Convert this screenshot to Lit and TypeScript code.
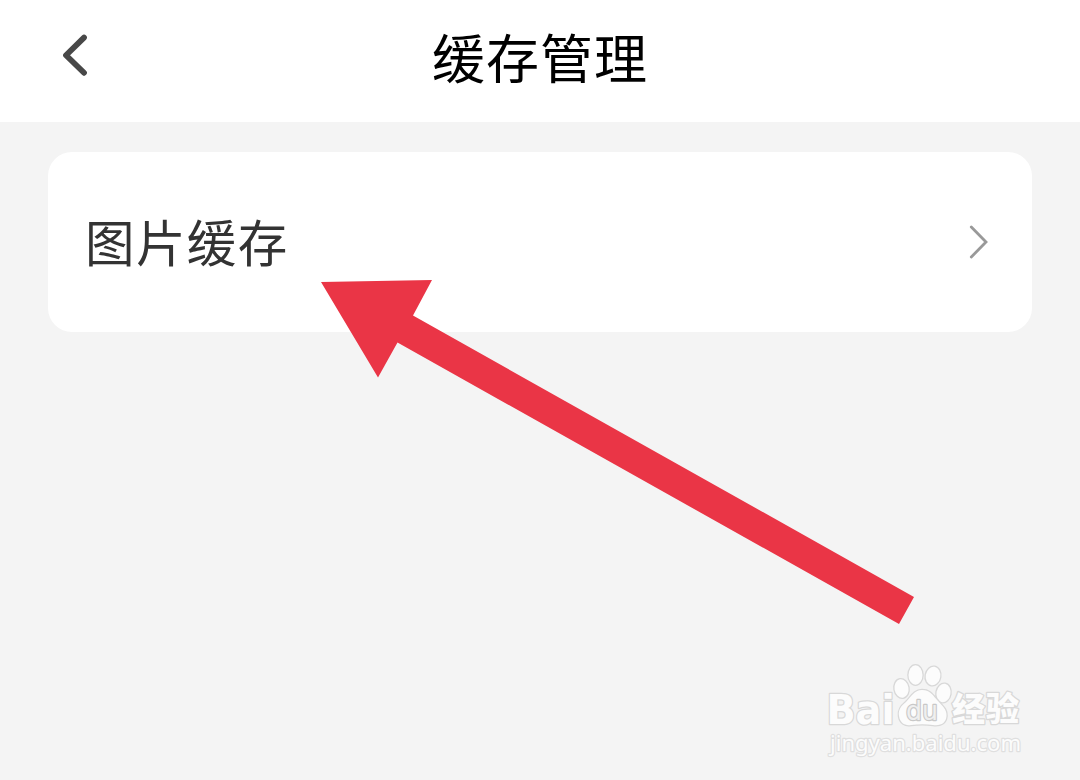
import { LitElement, css, html } from "lit";
import { customElement, property } from "lit/decorators.js";

@customElement("x-header")
export class Header extends LitElement {
  static styles = css`
    :host {
      display: block;
    }

    header {
      display: grid;
      grid-template-columns: 150px 1fr 150px;
      align-items: center;
      height: 122px;
      box-sizing: border-box;
      padding-bottom: 10px;
      background: #fff;
    }

    .back {
      display: block;
      width: 40px;
      height: 50px;
      margin: 0 0 2px 55px;
      padding: 0;
      border: none;
      background: none;
    }

    svg {
      display: block;
    }

    h1 {
      margin: 0;
      text-align: center;
      font-size: 53px;
      line-height: 80px;
      letter-spacing: 1px;
      font-weight: 400;
      color: #000;
    }
  `;

  @property()
  heading = "";

  render() {
    return html`<header>
      <button class="back">
        <svg width="40" height="50" viewBox="0 0 40 50" fill="none">
          <path
            d="M29 7.6 L11 25.2 L29 42.8"
            stroke="#484848"
            stroke-width="5.8"
            stroke-linecap="round"
            stroke-linejoin="round"
          />
        </svg>
      </button>
      <h1>${this.heading}</h1>
    </header>`;
  }
}

@customElement("x-cell")
export class Cell extends LitElement {
  static styles = css`
    :host {
      display: block;
    }

    .cell {
      display: flex;
      align-items: center;
      justify-content: space-between;
      height: 180px;
      box-sizing: border-box;
      padding: 0 40px 0 37px;
      border-radius: 24px;
      background: #fff;
    }

    .label {
      padding-bottom: 2px;
      font-size: 49.5px;
      line-height: 74px;
      letter-spacing: 1.4px;
      color: #333;
    }

    svg {
      display: block;
    }
  `;

  @property()
  label = "";

  render() {
    return html`<div class="cell">
      <span class="label">${this.label}</span>
      <svg width="26" height="40" viewBox="0 0 26 40" fill="none">
        <path
          d="M5.3 5 L20 20 L5.3 35"
          stroke="#999"
          stroke-width="2.8"
          stroke-linecap="round"
          stroke-linejoin="miter"
        />
      </svg>
    </div>`;
  }
}

@customElement("x-watermark")
export class Watermark extends LitElement {
  static styles = css`
    :host {
      display: block;
    }

    svg {
      display: block;
    }

    .mark {
      fill: #fcfcfc;
      stroke: #d8d8d8;
      stroke-width: 2.6px;
      paint-order: stroke;
      stroke-linejoin: round;
    }

    .latin {
      font-family: "DejaVu Sans", sans-serif;
      font-weight: 700;
    }

    .du {
      font-family: "DejaVu Sans", sans-serif;
      stroke: #c8c8c8;
      stroke-width: 2.4px;
      fill: #efefef;
    }

    .han {
      font-family: "Noto Sans CJK SC", sans-serif;
      font-weight: 900;
    }

    .url {
      font-family: "Noto Sans", sans-serif;
      stroke: #dfdfdf;
      stroke-width: 2.4px;
    }
  `;

  render() {
    return html`<svg width="230" height="120" viewBox="0 0 230 120">
      <g class="mark">
        <text class="latin" x="16.5" y="73.5" font-size="41" textLength="68" lengthAdjust="spacingAndGlyphs">Bai</text>
        <ellipse cx="91.5" cy="38.5" rx="7" ry="9.3" transform="rotate(-10 91.5 38.5)" />
        <ellipse cx="105.5" cy="25" rx="7" ry="9.7" />
        <ellipse cx="123" cy="26" rx="7.3" ry="9.3" transform="rotate(10 123 26)" />
        <ellipse cx="133.5" cy="43" rx="7" ry="9.3" transform="rotate(10 133.5 43)" />
        <path
          d="M112 40 C104 40 101 47 96 52 C91 56 88 60 89 66 C90 73 95 76 101 75 C109 74 116 74 123 75 C131 76 136 73 136.5 66 C137 59 132 56 128 51 C123 46 121 40 112 40 Z"
        />
        <text class="du" x="96" y="69.5" font-size="26.5" textLength="32" lengthAdjust="spacingAndGlyphs">du</text>
        <text class="han" x="142" y="71" font-size="33" textLength="67">经验</text>
        <text class="url" x="20" y="100.5" font-size="22" textLength="191" lengthAdjust="spacingAndGlyphs">jingyan.baidu.com</text>
      </g>
    </svg>`;
  }
}

@customElement("app-root")
export class AppRoot extends LitElement {
  static styles = css`
    :host {
      display: block;
      position: relative;
      width: 1080px;
      height: 780px;
      overflow: hidden;
      background: #f4f4f4;
      font-family: "Noto Sans CJK SC", "Noto Sans", sans-serif;
    }

    main {
      padding: 30px 48px;
    }

    .arrow {
      position: absolute;
      inset: 0;
      pointer-events: none;
    }

    .watermark {
      position: absolute;
      left: 810px;
      top: 650px;
    }
  `;

  render() {
    return html`
      <x-header heading="缓存管理"></x-header>
      <main>
        <x-cell label="图片缓存"></x-cell>
      </main>
      <svg class="arrow" width="1080" height="780" viewBox="0 0 1080 780">
        <polygon
          points="321,282 432,280 413,315.5 914,597 899,624 397.5,342.5 378,377.5"
          fill="#ea3546"
        />
      </svg>
      <x-watermark class="watermark"></x-watermark>
    `;
  }
}

declare global {
  interface HTMLElementTagNameMap {
    "x-header": Header;
    "x-cell": Cell;
    "x-watermark": Watermark;
    "app-root": AppRoot;
  }
}
